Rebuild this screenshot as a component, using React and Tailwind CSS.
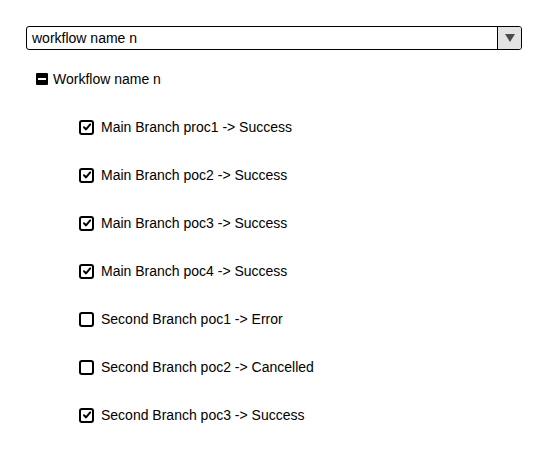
import React from "react";

const items = [
  { label: "Main Branch proc1 -> Success", checked: true },
  { label: "Main Branch poc2 -> Success", checked: true },
  { label: "Main Branch poc3 -> Success", checked: true },
  { label: "Main Branch poc4 -> Success", checked: true },
  { label: "Second Branch poc1 -> Error", checked: false },
  { label: "Second Branch poc2 -> Cancelled", checked: false },
  { label: "Second Branch poc3 -> Success", checked: true },
];

function Box({ checked }) {
  return (
    <span className="flex h-[15px] w-[15px] shrink-0 items-center justify-center rounded-[3px] border-2 border-black bg-white">
      {checked && (
        <svg width="10" height="10" viewBox="0 0 10 10">
          <path d="M2 5.3 L4 7.4 L8.2 2.4" fill="none" stroke="black" strokeWidth="2" strokeLinecap="round" strokeLinejoin="round" />
        </svg>
      )}
    </span>
  );
}

export default function App() {
  return (
    <div className="min-h-[453px] w-[540px] bg-white pl-[26px] pt-[26px] text-[14px] text-black" style={{ fontFamily: '"Liberation Sans", Arial, sans-serif' }}>
      <div className="flex h-[24px] w-[496px] items-stretch rounded-[3px] border border-black">
        <div className="flex flex-1 items-center pl-[5px] leading-none">workflow name n</div>
        <div className="flex w-[24px] items-center justify-center rounded-r-[2px] border-l border-black bg-[#e3e3e3]">
          <svg width="10" height="8" viewBox="0 0 10 8">
            <path d="M0 0 H10 L5 8 Z" fill="#4a4a4a" />
          </svg>
        </div>
      </div>
      <div className="mt-[21px] flex h-[16px] items-center pl-[10px]">
        <span className="flex h-[12px] w-[12px] items-center justify-center rounded-[1px] bg-black">
          <span className="h-[2px] w-[8px] bg-white" />
        </span>
        <span className="ml-[5px] leading-none">Workflow name n</span>
      </div>
      <div className="mt-[32px] flex flex-col gap-[32px] pl-[53px]">
        {items.map((it) => (
          <div key={it.label} className="flex h-[16px] items-center">
            <Box checked={it.checked} />
            <span className="ml-[7px] leading-none">{it.label}</span>
          </div>
        ))}
      </div>
    </div>
  );
}
